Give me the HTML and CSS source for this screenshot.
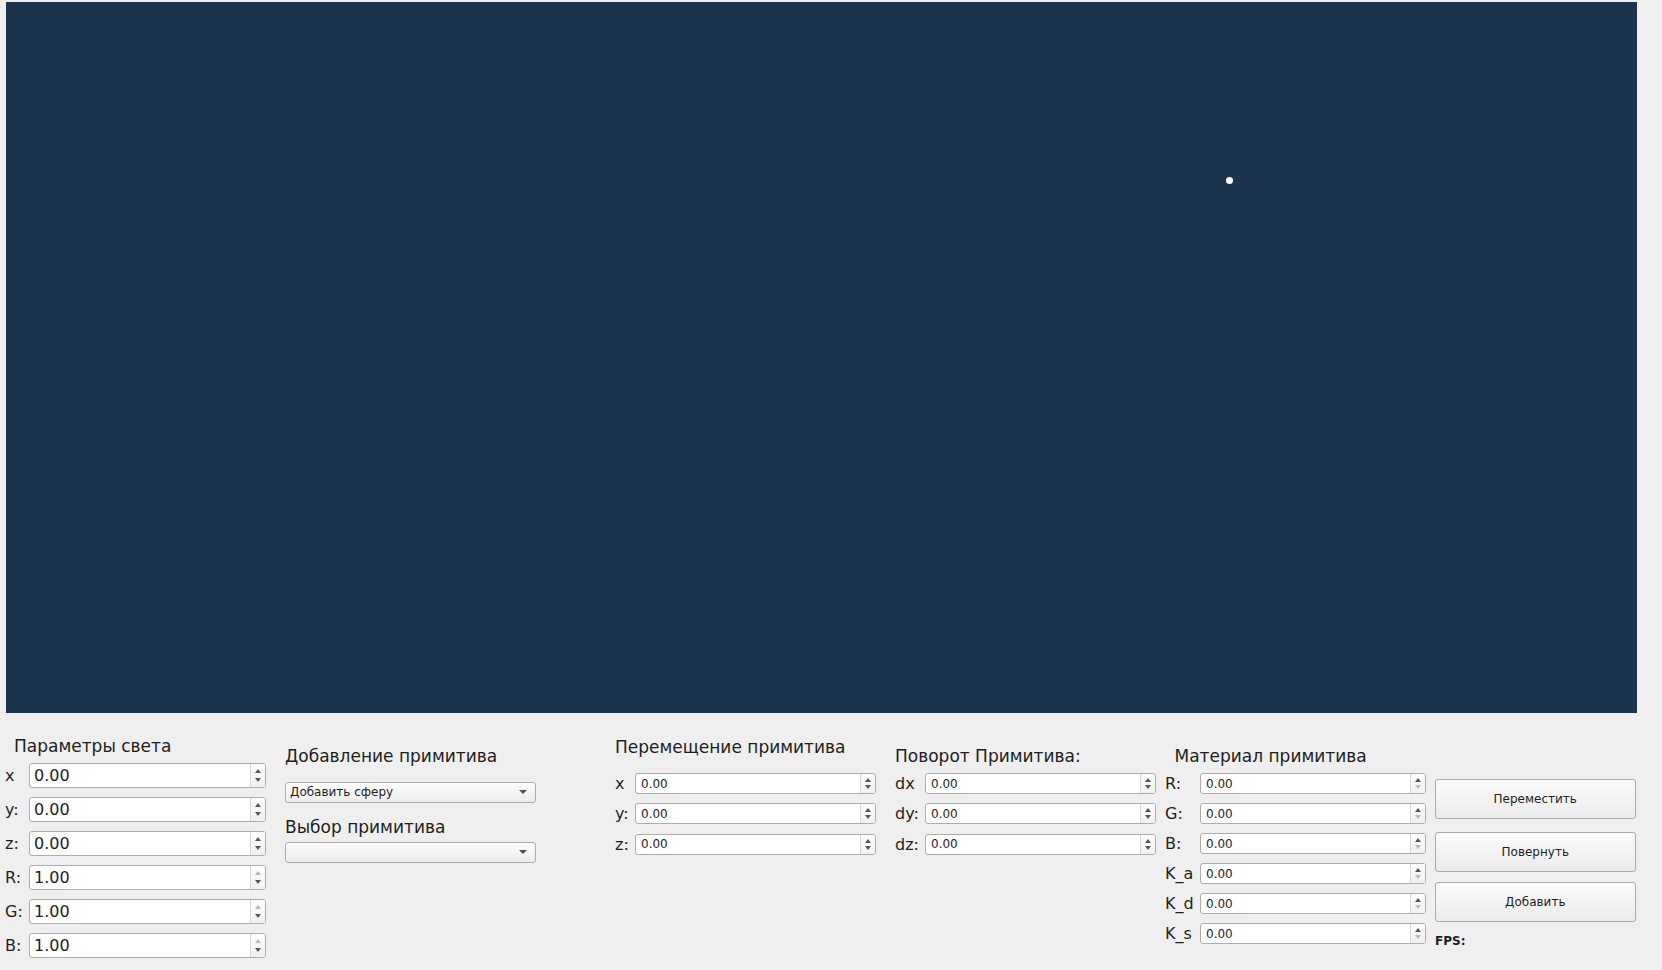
FILE: index.html
```html
<!DOCTYPE html>
<html lang="ru">
<head>
<meta charset="utf-8">
<title>Scene</title>
<link rel="stylesheet" href="styles.css">
</head>
<body>
<div class="viewport"><div class="light-dot"></div></div>
<div class="panel">
  <section class="col col-light">
    <div class="title">Параметры света</div>
    <div class="rows big">
      <div class="row"><span class="lbl">x</span><div class="spin"><span class="val">0.00</span><span class="btns"><i class="up"></i><i class="dn"></i></span></div></div>
      <div class="row"><span class="lbl">y:</span><div class="spin"><span class="val">0.00</span><span class="btns"><i class="up"></i><i class="dn"></i></span></div></div>
      <div class="row"><span class="lbl">z:</span><div class="spin"><span class="val">0.00</span><span class="btns"><i class="up"></i><i class="dn"></i></span></div></div>
      <div class="row"><span class="lbl">R:</span><div class="spin"><span class="val">1.00</span><span class="btns"><i class="up off"></i><i class="dn"></i></span></div></div>
      <div class="row"><span class="lbl">G:</span><div class="spin"><span class="val">1.00</span><span class="btns"><i class="up off"></i><i class="dn"></i></span></div></div>
      <div class="row"><span class="lbl">B:</span><div class="spin"><span class="val">1.00</span><span class="btns"><i class="up off"></i><i class="dn"></i></span></div></div>
    </div>
  </section>

  <section class="col col-add">
    <div class="title">Добавление примитива</div>
    <div class="combo combo-first"><span>Добавить сферу</span><i class="arrow"></i></div>
    <div class="title title-second">Выбор примитива</div>
    <div class="combo combo-second"><span></span><i class="arrow"></i></div>
  </section>

  <section class="col col-move">
    <div class="title">Перемещение примитива</div>
    <div class="rows small">
      <div class="row"><span class="lbl">x</span><div class="spin"><span class="val">0.00</span><span class="btns"><i class="up"></i><i class="dn"></i></span></div></div>
      <div class="row"><span class="lbl">y:</span><div class="spin"><span class="val">0.00</span><span class="btns"><i class="up"></i><i class="dn"></i></span></div></div>
      <div class="row"><span class="lbl">z:</span><div class="spin"><span class="val">0.00</span><span class="btns"><i class="up"></i><i class="dn"></i></span></div></div>
    </div>
  </section>

  <section class="col col-rot">
    <div class="title">Поворот Примитива:</div>
    <div class="rows small">
      <div class="row"><span class="lbl">dx</span><div class="spin"><span class="val">0.00</span><span class="btns"><i class="up"></i><i class="dn"></i></span></div></div>
      <div class="row"><span class="lbl">dy:</span><div class="spin"><span class="val">0.00</span><span class="btns"><i class="up"></i><i class="dn"></i></span></div></div>
      <div class="row"><span class="lbl">dz:</span><div class="spin"><span class="val">0.00</span><span class="btns"><i class="up"></i><i class="dn"></i></span></div></div>
    </div>
  </section>

  <section class="col col-mat">
    <div class="title">Материал примитива</div>
    <div class="rows small">
      <div class="row"><span class="lbl">R:</span><div class="spin"><span class="val">0.00</span><span class="btns"><i class="up"></i><i class="dn off"></i></span></div></div>
      <div class="row"><span class="lbl">G:</span><div class="spin"><span class="val">0.00</span><span class="btns"><i class="up"></i><i class="dn off"></i></span></div></div>
      <div class="row"><span class="lbl">B:</span><div class="spin"><span class="val">0.00</span><span class="btns"><i class="up"></i><i class="dn off"></i></span></div></div>
      <div class="row"><span class="lbl">K_a</span><div class="spin"><span class="val">0.00</span><span class="btns"><i class="up"></i><i class="dn off"></i></span></div></div>
      <div class="row"><span class="lbl">K_d</span><div class="spin"><span class="val">0.00</span><span class="btns"><i class="up"></i><i class="dn off"></i></span></div></div>
      <div class="row"><span class="lbl">K_s</span><div class="spin"><span class="val">0.00</span><span class="btns"><i class="up"></i><i class="dn off"></i></span></div></div>
    </div>
  </section>

  <section class="col col-actions">
    <button class="btn btn-move">Переместить</button>
    <button class="btn btn-rotate">Повернуть</button>
    <button class="btn btn-add">Добавить</button>
    <div class="fps">FPS:</div>
  </section>
</div>
</body>
</html>
```

FILE: styles.css
```css
* { box-sizing: border-box; }
html, body { margin: 0; padding: 0; }
body {
  width: 1662px;
  height: 970px;
  overflow: hidden;
  background: #efefef;
  font-family: "DejaVu Sans", "Liberation Sans", sans-serif;
  color: #1e1e1e;
}

.viewport {
  position: relative;
  margin: 2px 0 0 6px;
  width: 1631px;
  height: 711px;
  background: #1b334d;
}
.light-dot {
  position: absolute;
  left: 1220px;
  top: 175px;
  width: 7px;
  height: 7px;
  border-radius: 50%;
  background: #ffffff;
}

.panel {
  display: flex;
  align-items: flex-start;
  height: 257px;
}
.col { display: flex; flex-direction: column; flex: none; }

.title {
  font-size: 17px;
  line-height: 20px;
  height: 20px;
  white-space: nowrap;
}

.rows { display: flex; flex-direction: column; }
.row { display: flex; align-items: center; }
.lbl { font-size: 16px; line-height: 19px; flex: none; white-space: nowrap; }

.spin {
  display: flex;
  border: 1px solid #adadad;
  border-radius: 3px;
  background: #ffffff;
  flex: none;
}
.val {
  flex: 1;
  display: flex;
  align-items: center;
  padding-left: 5px;
  white-space: nowrap;
}
.btns {
  width: 15px;
  flex: none;
  border-left: 1px solid #d6d6d6;
  display: flex;
  flex-direction: column;
  align-items: center;
  justify-content: center;
  gap: 4px;
  background: linear-gradient(#fdfdfd, #f1f1f1);
  border-radius: 0 2px 2px 0;
}
.btns i { display: block; width: 0; height: 0; border-left: 3.5px solid transparent; border-right: 3.5px solid transparent; }
.btns .up { border-bottom: 4px solid #555555; }
.btns .dn { border-top: 4px solid #555555; }
.btns .up.off { border-bottom-color: #b9b9b9; }
.btns .dn.off { border-top-color: #b9b9b9; }

/* big spin boxes (light params) */
.big .row { height: 25px; margin-top: 9px; }
.big .row:first-child { margin-top: 7px; }
.big .spin { height: 25px; }
.big .val { font-size: 16px; padding-left: 4px; }
.big .btns { gap: 5px; }

/* small spin boxes */
.small .row { height: 21px; margin-top: 9.4px; }
.small .spin { height: 21px; }
.small .val { font-size: 12px; padding-left: 5px; }
.small .btns { gap: 3px; }

/* columns */
.col-light { margin-left: 5px; width: 261px; padding-top: 23.2px; }
.col-light .title { padding-left: 9px; }
.col-light .lbl { width: 24px; padding-left: 0; }
.col-light .spin { width: 237px; }

.col-add { margin-left: 19px; width: 251px; padding-top: 32.9px; }
.col-add .title { padding-left: 0; }
.combo {
  display: flex;
  align-items: center;
  justify-content: space-between;
  height: 21px;
  border: 1px solid #ababab;
  border-radius: 3px;
  background: linear-gradient(#fdfdfd, #ececec);
  padding: 0 8px 0 4px;
  font-size: 12px;
}
.combo .arrow {
  display: block;
  width: 0; height: 0;
  border-left: 4px solid transparent;
  border-right: 4px solid transparent;
  border-top: 4px solid #505050;
}
.combo-first { margin-top: 16px; }
.title-second { margin-top: 14.2px; }
.combo-second { margin-top: 4.8px; }

.col-move { margin-left: 79px; width: 262px; padding-top: 23.8px; }
.col-move .rows .row:first-child { margin-top: 16.3px; }
.col-move .title { padding-left: 0; }
.col-move .lbl { width: 20px; }
.col-move .spin { width: 241px; }

.col-rot { margin-left: 18px; width: 262px; padding-top: 33.2px; }
.col-rot .title { padding-left: 0; }
.col-rot .rows .row:first-child { margin-top: 6.9px; }
.col-rot .lbl { width: 30px; padding-left: 0; }
.col-rot .spin { width: 231px; }

.col-mat { margin-left: 8px; width: 261px; padding-top: 33.2px; }
.col-mat .title { padding-left: 9.5px; }
.col-mat .rows .row { margin-top: 9px; }
.col-mat .rows .row:first-child { margin-top: 6.9px; }
.col-mat .lbl { width: 35px; }
.col-mat .spin { width: 225.5px; }

.col-actions { margin-left: 9px; width: 201px; padding-top: 65.5px; }
.btn {
  display: block;
  width: 200.5px;
  height: 40.5px;
  border: 1px solid #aaaaaa;
  border-radius: 3px;
  background: linear-gradient(#fbfbfb, #ebebeb);
  font-family: "DejaVu Sans", "Liberation Sans", sans-serif;
  font-size: 12px;
  color: #1e1e1e;
  padding: 0;
}
.btn-rotate { margin-top: 12.5px; }
.btn-add { margin-top: 9.5px; }
.fps {
  margin-top: 12.4px;
  padding-left: 0;
  font-size: 12px;
  line-height: 14px;
  font-weight: bold;
}
```
